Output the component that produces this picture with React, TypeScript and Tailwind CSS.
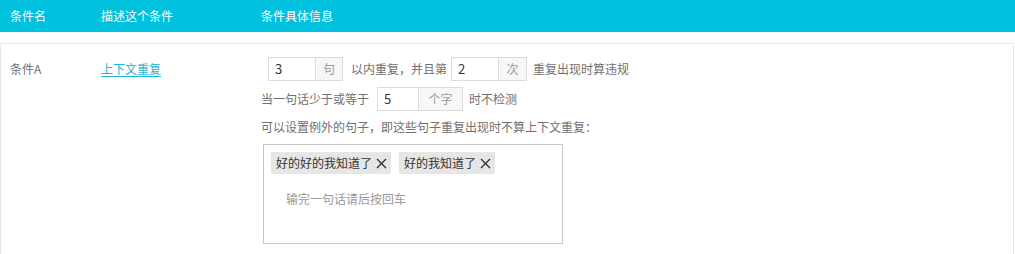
import React from 'react'

const font = { fontFamily: '"Noto Sans CJK SC", "Liberation Sans", sans-serif' }

function CloseIcon() {
  return (
    <svg width="11" height="11" viewBox="0 0 11 11" className="ml-[4px]">
      <path d="M1 1 L10 10 M10 1 L1 10" stroke="#333" strokeWidth="1.4" />
    </svg>
  )
}

function AddonInput({ value, unit, inputW, unitW }: { value: string; unit: string; inputW: string; unitW: string }) {
  return (
    <div className="flex h-6 border border-[#dcdcdc]">
      <div className={`${inputW} flex items-center pl-[6px] text-[13px] text-[#333] bg-white`}>{value}</div>
      <div className={`${unitW} flex items-center justify-center border-l border-[#dcdcdc] bg-[#f7f7f7] text-[#999]`}>{unit}</div>
    </div>
  )
}

function Tag({ text }: { text: string }) {
  return (
    <div className="flex h-[22px] items-center bg-[#e6e6e6] pl-[5px] pr-[4px] text-[#333]">
      <span>{text}</span>
      <CloseIcon />
    </div>
  )
}

export default function App() {
  return (
    <div className="w-[1015px] h-[254px] overflow-hidden bg-white text-xs text-[#707070]" style={font}>
      <div className="flex h-8 items-center bg-[#00c1de] text-white">
        <div className="w-[91px] pl-[10px]">条件名</div>
        <div className="w-[160px] pl-[10px]">描述这个条件</div>
        <div className="pl-[10px]">条件具体信息</div>
      </div>

      <div className="mt-[11px] w-[1014px] border border-[#e8e8e8] pt-[13px] pb-4">
        <div className="flex items-start">
          <div className="flex h-6 w-[90px] items-center pl-[9px]">条件A</div>
          <div className="flex h-6 w-[160px] items-center pl-[10px]">
            <a className="text-[#1fb3d6] underline underline-offset-2">上下文重复</a>
          </div>
          <div className="flex flex-col pl-[10px]">
            <div className="ml-[7px] flex items-center">
              <AddonInput value="3" unit="句" inputW="w-[46px]" unitW="w-[27px]" />
              <span className="ml-2 mr-1">以内重复，并且第</span>
              <AddonInput value="2" unit="次" inputW="w-[46px]" unitW="w-[28px]" />
              <span className="ml-[6px]">重复出现时算违规</span>
            </div>
            <div className="mt-[6px] flex items-center">
              <span className="mr-[8px]">当一句话少于或等于</span>
              <AddonInput value="5" unit="个字" inputW="w-[40px]" unitW="w-[44px]" />
              <span className="ml-[6px]">时不检测</span>
            </div>
            <div className="mt-[6px] flex h-5 items-center">可以设置例外的句子，即这些句子重复出现时不算上下文重复：</div>
            <div className="ml-[2px] mt-[7px] h-[100px] w-[300px] border border-[#c8c8c8] pt-[7px] pl-[7px]">
              <div className="flex gap-2">
                <Tag text="好的好的我知道了" />
                <Tag text="好的我知道了" />
              </div>
              <div className="mt-[17px] pl-[15px] text-[#999]">输完一句话请后按回车</div>
            </div>
          </div>
        </div>
      </div>
    </div>
  )
}
